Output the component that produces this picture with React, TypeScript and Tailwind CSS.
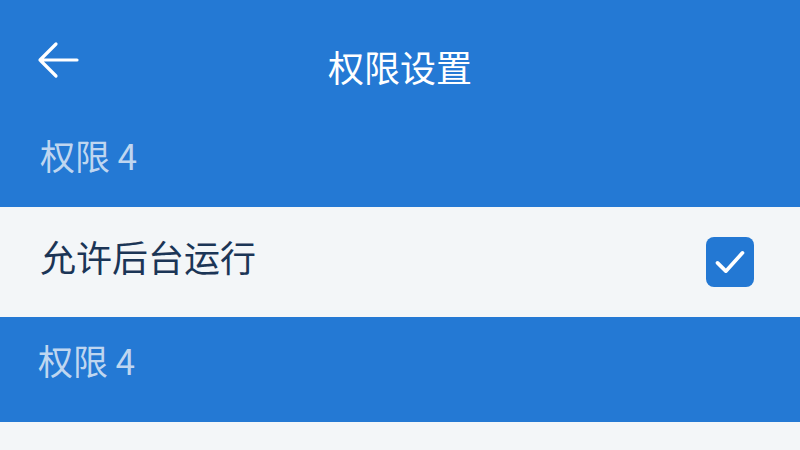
import React from "react";

const CheckBox: React.FC = () => (
  <div className="w-[48px] h-[50px] rounded-[8px] bg-[#2378d3] flex items-center justify-center">
    <svg viewBox="0 0 24 24" className="w-[40px] h-[40px]" fill="none" stroke="white" strokeWidth="2.2" strokeLinecap="round" strokeLinejoin="round">
      <path d="M4.5 12.5l5 5L19.5 6.5" />
    </svg>
  </div>
);

export default function App() {
  return (
    <div
      className="w-[800px] h-[450px] overflow-hidden bg-[#f3f6f8] flex flex-col"
      style={{ fontFamily: '"Noto Sans CJK SC", "Noto Sans", sans-serif' }}
    >
      <div className="bg-[#2479d4] h-[207px] flex flex-col">
        <div className="h-[128px] flex items-center px-[36px] relative">
          <svg viewBox="0 0 44 40" className="w-[44px] h-[40px] mt-[-8px]" fill="none" stroke="white" strokeWidth="3.2" strokeLinecap="round" strokeLinejoin="round">
            <path d="M41 20H4M20 4L4 20l16 16" />
          </svg>
          <div className="absolute inset-x-0 top-[42px] text-center text-white text-[36px] leading-[48px]">
            权限设置
          </div>
        </div>
        <div className="px-[40px] text-[#bfd6f0] text-[35px] leading-[48px] mt-[3px]">权限 4</div>
      </div>
      <div className="h-[110px] flex items-center justify-between pl-[40px] pr-[46px]">
        <span className="text-[#1b3556] text-[36px] leading-[48px] mt-[-12px]">允许后台运行</span>
        <CheckBox />
      </div>
      <div className="bg-[#2479d4] h-[105px] flex items-center px-[38px]">
        <span className="text-[#bfd6f0] text-[35px] leading-[48px] mt-[-20px]">权限 4</span>
      </div>
    </div>
  );
}
